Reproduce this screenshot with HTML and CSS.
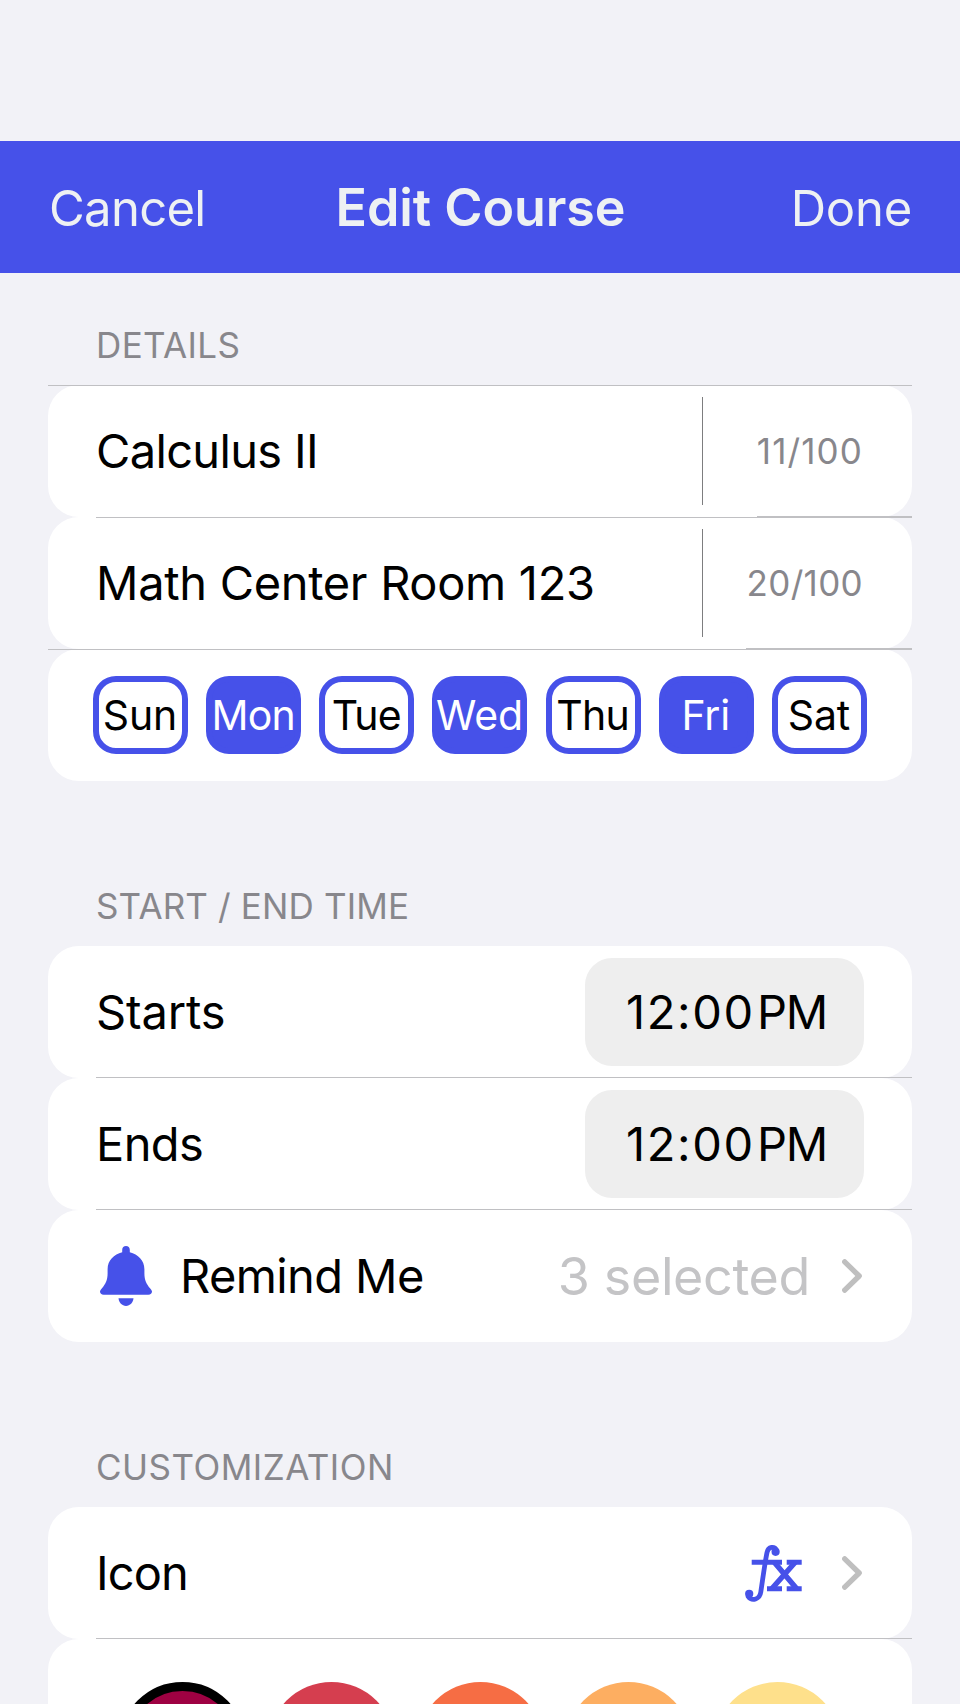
FILE: index.html
```
<!DOCTYPE html>
<html lang="en">
<head>
<meta charset="utf-8">
<title>Edit Course</title>
<link rel="stylesheet" href="styles.css">
</head>
<body>
<div class="screen">
  <header class="nav">
    <span class="nav-action cancel">Cancel</span>
    <h1 class="nav-title">Edit Course</h1>
    <span class="nav-action done">Done</span>
  </header>

  <main class="form">
    <section class="section details">
      <h2 class="section-title">DETAILS</h2>
      <div class="row line-top">
        <span class="label course">Calculus II</span>
        <span class="counter eleven">11/100</span>
      </div>
      <div class="row line-inset">
        <span class="label place">Math Center Room 123</span>
        <span class="counter twenty">20/100</span>
      </div>
      <div class="row line-top days">
        <span class="day">Sun</span>
        <span class="day on tight">Mon</span>
        <span class="day tight">Tue</span>
        <span class="day on">Wed</span>
        <span class="day tight">Thu</span>
        <span class="day on">Fri</span>
        <span class="day">Sat</span>
      </div>
    </section>

    <section class="section">
      <h2 class="section-title time-title">START / END TIME</h2>
      <div class="row line-bottom">
        <span class="label starts">Starts</span>
        <span class="time"><span class="clock">12:00</span><span class="period">PM</span></span>
      </div>
      <div class="row line-bottom">
        <span class="label">Ends</span>
        <span class="time"><span class="clock">12:00</span><span class="period">PM</span></span>
      </div>
      <div class="row">
        <svg class="bell" viewBox="0 0 52 60" width="52" height="60">
          <path d="M26 0C28.3 0 29.8 1.6 29.8 3.9V6.3C38 8.2 44.4 14.5 44.4 23.2V27.5C44.4 34 46.5 38 50 42.2C51.3 43.8 52 44.5 52 45.6C52 47.5 50.6 48.8 48.3 48.8H3.7C1.4 48.8 0 47.5 0 45.6C0 44.5.7 43.8 2 42.2C5.5 38 7.6 34 7.6 27.5V23.2C7.6 14.5 14 8.2 22.2 6.3V3.9C22.2 1.6 23.7 0 26 0Z"/>
          <path d="M18.5 52.3H33.5C33.2 56.5 30 60 26 60S18.8 56.5 18.5 52.3Z"/>
        </svg>
        <span class="label remind">Remind Me</span>
        <span class="value">3 selected</span>
        <svg class="chevron" viewBox="0 0 20 34" width="20" height="34"><path d="M2.7 2.8L17.2 17L2.7 31.2"/></svg>
      </div>
    </section>

    <section class="section">
      <h2 class="section-title custom-title">CUSTOMIZATION</h2>
      <div class="row line-bottom">
        <span class="label icon-label">Icon</span>
        <svg class="function" viewBox="0 0 58 58" width="58" height="58">
          <path class="stem" d="M31.5 6.2C29.5 2 23.2 2.3 22 8.5C19.5 21 17.8 35 15.8 48C14.8 55.5 7 57.6 3.2 52.6"/>
          <circle cx="30.6" cy="7.8" r="4.1"/>
          <circle cx="4.2" cy="49.8" r="4.1"/>
          <path class="serif" d="M6.7 18.3H37M41.7 18.3H56.7M22 44.8H37M41.7 44.8H56.7"/>
          <path class="cross" d="M29.5 18.5L51.5 44.5M50 18.5L27 44.5"/>
        </svg>
        <svg class="chevron" viewBox="0 0 20 34" width="20" height="34"><path d="M2.7 2.8L17.2 17L2.7 31.2"/></svg>
      </div>
      <div class="row swatches">
        <span class="swatch ruby selected"></span>
        <span class="swatch red"></span>
        <span class="swatch orange"></span>
        <span class="swatch amber"></span>
        <span class="swatch yellow"></span>
      </div>
    </section>
  </main>
</div>
</body>
</html>
```

FILE: styles.css
```
* {
  box-sizing: border-box;
}

body {
  margin: 0;
  background: #f2f2f7;
  font-family: Inter, "Liberation Sans", sans-serif;
  color: #000;
}

.screen {
  height: 1704px;
  padding-top: 141px;
  overflow: hidden;
}

.nav {
  height: 132px;
  padding: 2px 48px 0 49px;
  background: #4651e9;
  color: #eef1f3;
  display: grid;
  grid-template-columns: 1fr auto 1fr;
  align-items: center;
  white-space: nowrap;
}

.nav-action {
  font-size: 49px;
}

.cancel {
  letter-spacing: -0.7px;
}

.done {
  justify-self: end;
  letter-spacing: -0.23px;
}

.nav-title {
  margin: 0;
  padding-bottom: 2px;
  font-size: 52px;
  font-weight: 600;
  letter-spacing: -0.08px;
}

.form {
  padding: 0 48px;
}

.section {
  padding-bottom: 104px;
}

.section-title {
  margin: 0;
  padding: 0 48px 19px;
  font-size: 35px;
  font-weight: 400;
  line-height: 42px;
  letter-spacing: 0.37px;
  color: #88878c;
}

.details .section-title {
  padding-top: 51px;
}

.section-title.time-title {
  letter-spacing: 0.15px;
}

.section-title.custom-title {
  letter-spacing: 0.47px;
}

.row {
  position: relative;
  height: 132px;
  padding: 0 48px;
  border-radius: 31px;
  background: #fff;
  display: flex;
  align-items: center;
  white-space: nowrap;
}

/* Hairline separators lie over the rounded row corners. */
.line-top::before,
.line-inset::before,
.line-bottom::before {
  content: "";
  position: absolute;
  left: 0;
  right: 0;
  top: 0;
  height: 1px;
  background: #c0c0c3;
}

.line-inset::before,
.line-bottom::before {
  left: 48px;
}

.line-bottom::before {
  top: auto;
  bottom: 0;
}

.label {
  padding-bottom: 2px;
  font-size: 47px;
  letter-spacing: -0.6px;
}

.course {
  letter-spacing: -0.65px;
}

.place {
  letter-spacing: -0.32px;
}

.starts {
  letter-spacing: -0.15px;
}

.icon-label {
  letter-spacing: -0.88px;
}

.remind {
  margin-left: 28px;
}

.counter {
  width: 162px;
  height: 108px;
  margin-left: auto;
  padding-right: 1px;
  border-left: 1px solid #7d7d7f;
  font-size: 35px;
  line-height: 109px;
  text-align: right;
  color: #88878c;
}

.counter::after {
  content: "";
  position: absolute;
  right: 0;
  bottom: 0;
  height: 1px;
  background: #c0c0c3;
}

.eleven {
  letter-spacing: 1.12px;
}

.eleven::after {
  width: 155px;
}

.twenty {
  letter-spacing: 0.33px;
}

.twenty::after {
  width: 166px;
}

.days {
  padding: 0 45px;
  justify-content: space-between;
}

.day {
  width: 95px;
  height: 78px;
  padding-right: 1px;
  border: 6px solid #4651e9;
  border-radius: 23px;
  display: flex;
  align-items: center;
  justify-content: center;
  font-size: 41px;
  letter-spacing: -0.1px;
}

.day.tight {
  letter-spacing: -0.8px;
}

.day.on {
  background: #4651e9;
  color: #fff;
}

.time {
  width: 279px;
  height: 108px;
  margin-left: auto;
  padding: 0 0 2px 41px;
  border-radius: 27px;
  background: #eee;
  display: flex;
  align-items: center;
  font-size: 47px;
}

.clock {
  width: 131px;
  letter-spacing: 1.63px;
}

.period {
  letter-spacing: -1.32px;
}

.bell {
  margin-left: 4px;
  fill: #4651e9;
}

.value {
  margin-left: auto;
  margin-right: 32px;
  font-size: 52px;
  letter-spacing: -0.36px;
  color: #c4c4c6;
}

.chevron {
  margin-right: 2px;
  fill: none;
  stroke: #bfbfbf;
  stroke-width: 5.3;
  stroke-linecap: round;
  stroke-linejoin: round;
}

.function {
  margin-left: auto;
  margin-right: 39px;
  fill: #4651e9;
}

.function path {
  fill: none;
  stroke: #4651e9;
}

.function .stem {
  stroke-width: 4.8;
  stroke-linecap: round;
}

.function .serif {
  stroke-width: 5;
}

.function .cross {
  stroke-width: 5.4;
}

.swatches {
  height: 200px;
  padding: 43px 71px 0;
  align-items: flex-start;
  justify-content: space-between;
}

.swatch {
  width: 127px;
  height: 127px;
  border-radius: 50%;
}

.selected {
  border: 9px solid #000;
}

.ruby {
  background: #9e0142;
}

.red {
  background: #d53e4f;
}

.orange {
  background: #f66d44;
}

.amber {
  background: #fdae61;
}

.yellow {
  background: #fee08b;
}
```
